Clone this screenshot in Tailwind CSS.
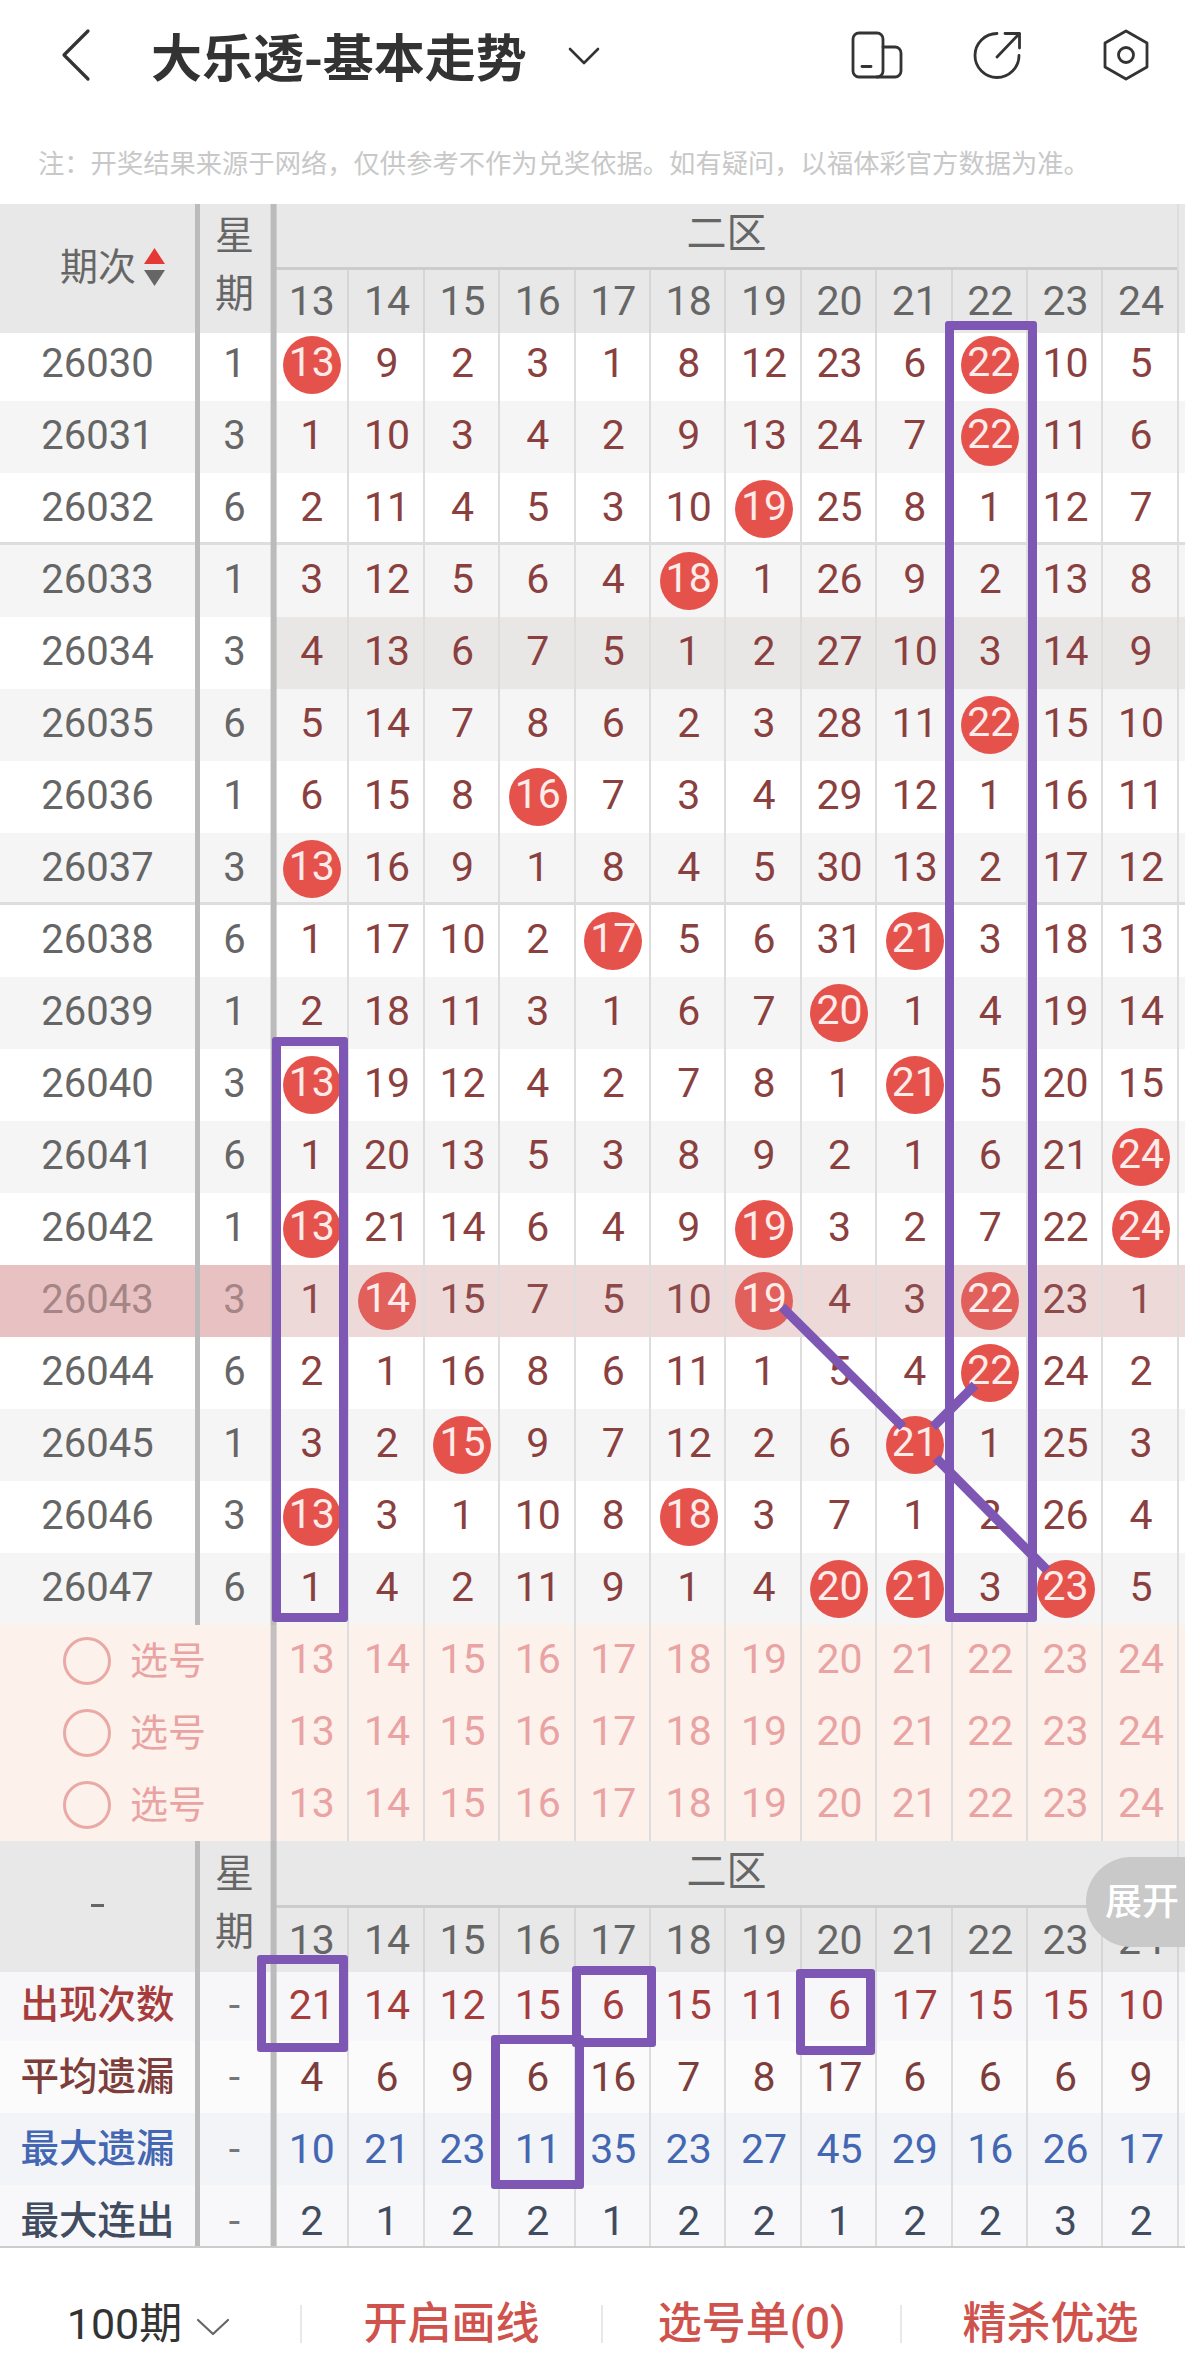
<!DOCTYPE html>
<html lang="zh-CN">
<head>
<meta charset="utf-8">
<title>大乐透-基本走势</title>
<script src="https://cdn.jsdelivr.net/npm/@tailwindcss/browser@4"></script>
</head>
<body class="bg-white">
<div class="relative h-[2374px] w-[1185px] overflow-hidden bg-white font-['Roboto','Noto_Sans_CJK_SC',sans-serif] text-[41px] leading-none text-[#666]">

  <!-- top bar -->
  <header class="flex h-[110px] items-center text-[#333]">
    <svg class="ml-[61px] h-[54px] w-[30px]" viewBox="0 0 30 54" fill="none" stroke="#333" stroke-width="3.2" stroke-linecap="round" stroke-linejoin="round"><path d="M27 3 3 27l24 24" /></svg>
    <h1 class="ml-[60px] font-['Noto_Sans_CJK_SC',sans-serif] text-[51px] font-bold">大乐透-基本走势</h1>
    <svg class="ml-[41px] mt-[1px] h-[20px] w-[32px]" viewBox="0 0 32 20" fill="none" stroke="#333" stroke-width="2.6" stroke-linecap="round" stroke-linejoin="round"><path d="m2 3 14 14L30 3" /></svg>
    <svg class="ml-[251px] h-[48px] w-[52px]" viewBox="0 0 52 48" fill="none" stroke="#333" stroke-width="2.800" stroke-linejoin="round" stroke-linecap="round"><rect x="2" y="2" width="30" height="44" rx="6" /><path d="M32 16h12a6 6 0 0 1 6 6v18a6 6 0 0 1-6 6H26" /><path d="M11 35.500h9" /></svg>
    <svg class="ml-[70px] h-[48px] w-[48px]" viewBox="0 0 48 48" fill="none" stroke="#333" stroke-width="2.800" stroke-linecap="round" stroke-linejoin="round"><path d="M24 2.500A22 22 0 1 0 46 24.500" /><path d="M24 26 46 3" /><path d="M32 2.500h14.500V17" /></svg>
    <svg class="ml-[81px] h-[52px] w-[48px]" viewBox="0 0 48 52" fill="none" stroke="#333" stroke-width="2.800" stroke-linejoin="round"><path d="m24 2 21 12v24L24 50 3 38V14z" /><circle cx="24" cy="26" r="7.500" /></svg>
  </header>

  <!-- note -->
  <p class="flex h-[94px] items-center pl-[38px] pt-[11px] font-['Noto_Sans_CJK_SC',sans-serif] text-[26.300px] text-[#c8c8c8]">注：开奖结果来源于网络，仅供参考不作为兑奖依据。如有疑问，以福体彩官方数据为准。</p>

  <!-- table header -->
  <section class="relative z-10 grid h-[129px] grid-cols-[195px_79px_1fr] bg-[#e8e8e8]">
    <div class="flex items-center justify-center gap-[8px] pl-[30px] pb-[3px] text-[38px]">
      <span>期次</span>
      <svg class="h-[38px] w-[21px] shrink-0" viewBox="0 0 21 38"><path d="M10.500 0 21 16H0z" fill="#e53935" /><path d="M0 22h21L10.500 38z" fill="#666" /></svg>
    </div>
    <div class="flex flex-col items-center justify-center gap-[19px] pb-[6px] text-[39px] shadow-[inset_5px_0_0_#bbb,inset_-3.400px_0_0_#bbb]"><span>星</span><span>期</span></div>
    <div>
      <div class="flex h-[66px] w-[904.800px] items-center justify-center pb-[6px] text-[40px] shadow-[inset_2.600px_0_0_#bbb,inset_-2px_0_0_#ddd,inset_0_-3px_0_#ccc]">二区</div>
      <div class="grid h-[63px] grid-cols-[repeat(12,75.400px)] [&>*]:flex [&>*]:items-center [&>*]:justify-center [&>*:first-child]:shadow-[inset_2.600px_0_0_#bbb,inset_-2px_0_0_#d6d6d6] [&>*:nth-child(n+2)]:shadow-[inset_-2px_0_0_#d6d6d6]">
        <span>13</span><span>14</span><span>15</span><span>16</span><span>17</span><span>18</span><span>19</span><span>20</span><span>21</span><span>22</span><span>23</span><span>24</span>
      </div>
    </div>
  </section>

  <!-- data rows -->
  <section class="-mt-[4px] text-[#8b4040] [&>div]:grid [&>div]:h-[72px] [&>div]:grid-cols-[195px_79px_repeat(12,75.400px)] [&>div>*]:flex [&>div>*]:items-center [&>div>*]:justify-center [&>div>*]:pb-[3px] [&>div>*:first-child]:text-[40px] [&>div>*:first-child]:text-[#666] [&>div>*:nth-child(2)]:text-[40px] [&>div>*:nth-child(2)]:text-[#666] [&>div>*:nth-child(2)]:shadow-[inset_5px_0_0_#bbb,inset_-3.400px_0_0_#bbb] [&>div>*:nth-child(3)]:shadow-[inset_2.600px_0_0_#bbb,inset_-2px_0_0_#ddd] [&>div>*:nth-child(n+4)]:shadow-[inset_-2px_0_0_#ddd] [&_i]:mt-[3px] [&_i]:flex [&_i]:h-[58px] [&_i]:w-[58px] [&_i]:shrink-0 [&_i]:items-center [&_i]:justify-center [&_i]:rounded-full [&_i]:bg-[#e5524c] [&_i]:pb-[5px] [&_i]:not-italic [&_i]:text-[#fdecea]">
    <div class="bg-white"><span>26030</span><span>1</span><span><i>13</i></span><span>9</span><span>2</span><span>3</span><span>1</span><span>8</span><span>12</span><span>23</span><span>6</span><span><i>22</i></span><span>10</span><span>5</span></div>
    <div class="bg-[#f5f5f5]"><span>26031</span><span>3</span><span>1</span><span>10</span><span>3</span><span>4</span><span>2</span><span>9</span><span>13</span><span>24</span><span>7</span><span><i>22</i></span><span>11</span><span>6</span></div>
    <div class="bg-white shadow-[inset_0_-3px_0_#ddd]"><span>26032</span><span>6</span><span>2</span><span>11</span><span>4</span><span>5</span><span>3</span><span>10</span><span><i>19</i></span><span>25</span><span>8</span><span>1</span><span>12</span><span>7</span></div>
    <div class="bg-[#f5f5f5]"><span>26033</span><span>1</span><span>3</span><span>12</span><span>5</span><span>6</span><span>4</span><span><i>18</i></span><span>1</span><span>26</span><span>9</span><span>2</span><span>13</span><span>8</span></div>
    <div class="bg-[linear-gradient(to_right,white_274px,#e9e6e6_274px)]"><span>26034</span><span>3</span><span>4</span><span>13</span><span>6</span><span>7</span><span>5</span><span>1</span><span>2</span><span>27</span><span>10</span><span>3</span><span>14</span><span>9</span></div>
    <div class="bg-[#f5f5f5]"><span>26035</span><span>6</span><span>5</span><span>14</span><span>7</span><span>8</span><span>6</span><span>2</span><span>3</span><span>28</span><span>11</span><span><i>22</i></span><span>15</span><span>10</span></div>
    <div class="bg-white"><span>26036</span><span>1</span><span>6</span><span>15</span><span>8</span><span><i>16</i></span><span>7</span><span>3</span><span>4</span><span>29</span><span>12</span><span>1</span><span>16</span><span>11</span></div>
    <div class="bg-[#f5f5f5] shadow-[inset_0_-3px_0_#ddd]"><span>26037</span><span>3</span><span><i>13</i></span><span>16</span><span>9</span><span>1</span><span>8</span><span>4</span><span>5</span><span>30</span><span>13</span><span>2</span><span>17</span><span>12</span></div>
    <div class="bg-white"><span>26038</span><span>6</span><span>1</span><span>17</span><span>10</span><span>2</span><span><i>17</i></span><span>5</span><span>6</span><span>31</span><span><i>21</i></span><span>3</span><span>18</span><span>13</span></div>
    <div class="bg-[#f5f5f5]"><span>26039</span><span>1</span><span>2</span><span>18</span><span>11</span><span>3</span><span>1</span><span>6</span><span>7</span><span><i>20</i></span><span>1</span><span>4</span><span>19</span><span>14</span></div>
    <div class="bg-white"><span>26040</span><span>3</span><span><i>13</i></span><span>19</span><span>12</span><span>4</span><span>2</span><span>7</span><span>8</span><span>1</span><span><i>21</i></span><span>5</span><span>20</span><span>15</span></div>
    <div class="bg-[#f5f5f5]"><span>26041</span><span>6</span><span>1</span><span>20</span><span>13</span><span>5</span><span>3</span><span>8</span><span>9</span><span>2</span><span>1</span><span>6</span><span>21</span><span><i>24</i></span></div>
    <div class="bg-white"><span>26042</span><span>1</span><span><i>13</i></span><span>21</span><span>14</span><span>6</span><span>4</span><span>9</span><span><i>19</i></span><span>3</span><span>2</span><span>7</span><span>22</span><span><i>24</i></span></div>
    <div class="bg-[linear-gradient(to_right,#e8c2c2_274px,#eed9d9_274px)] text-[#8e4a4a] [&>*:first-child]:!text-[#a58585] [&>*:nth-child(2)]:!text-[#a58585] [&_i]:!bg-[#e2605c]"><span>26043</span><span>3</span><span>1</span><span><i>14</i></span><span>15</span><span>7</span><span>5</span><span>10</span><span><i>19</i></span><span>4</span><span>3</span><span><i>22</i></span><span>23</span><span>1</span></div>
    <div class="bg-white"><span>26044</span><span>6</span><span>2</span><span>1</span><span>16</span><span>8</span><span>6</span><span>11</span><span>1</span><span>5</span><span>4</span><span><i>22</i></span><span>24</span><span>2</span></div>
    <div class="bg-[#f5f5f5]"><span>26045</span><span>1</span><span>3</span><span>2</span><span><i>15</i></span><span>9</span><span>7</span><span>12</span><span>2</span><span>6</span><span><i>21</i></span><span>1</span><span>25</span><span>3</span></div>
    <div class="bg-white"><span>26046</span><span>3</span><span><i>13</i></span><span>3</span><span>1</span><span>10</span><span>8</span><span><i>18</i></span><span>3</span><span>7</span><span>1</span><span>2</span><span>26</span><span>4</span></div>
    <div class="bg-[#f5f5f5]"><span>26047</span><span>6</span><span>1</span><span>4</span><span>2</span><span>11</span><span>9</span><span>1</span><span>4</span><span><i>20</i></span><span><i>21</i></span><span>3</span><span><i>23</i></span><span>5</span></div>
  </section>

  <!-- pick rows -->
  <section class="bg-[#fdf1ec] text-[#e9a3a3] [&>div]:grid [&>div]:h-[72px] [&>div]:grid-cols-[274px_repeat(12,75.400px)] [&>div>*]:flex [&>div>*]:items-center [&>div>*]:justify-center [&>div>*]:pb-[3px] [&>div>*:first-child]:justify-start [&>div>*:first-child]:gap-[19px] [&>div>*:first-child]:pl-[63px] [&>div>*:first-child]:pb-0 [&>div>*:first-child]:text-[38px] [&>div>*:first-child]:shadow-[inset_-3.400px_0_0_#c4c0c0] [&>div>*:nth-child(2)]:shadow-[inset_2.600px_0_0_#c4c0c0,inset_-2px_0_0_#ddd] [&>div>*:nth-child(n+3)]:shadow-[inset_-2px_0_0_#ddd] [&_b]:h-[48px] [&_b]:w-[48px] [&_b]:rounded-full [&_b]:border-[3px] [&_b]:border-[#e9aaa6]">
    <div><span><b></b><em class="not-italic">选号</em></span><span>13</span><span>14</span><span>15</span><span>16</span><span>17</span><span>18</span><span>19</span><span>20</span><span>21</span><span>22</span><span>23</span><span>24</span></div>
    <div><span><b></b><em class="not-italic">选号</em></span><span>13</span><span>14</span><span>15</span><span>16</span><span>17</span><span>18</span><span>19</span><span>20</span><span>21</span><span>22</span><span>23</span><span>24</span></div>
    <div><span><b></b><em class="not-italic">选号</em></span><span>13</span><span>14</span><span>15</span><span>16</span><span>17</span><span>18</span><span>19</span><span>20</span><span>21</span><span>22</span><span>23</span><span>24</span></div>
  </section>

  <!-- repeated header -->
  <section class="relative z-10 grid h-[131px] grid-cols-[195px_79px_1fr] bg-[#e8e8e8]">
    <div class="flex items-center justify-center pb-[3px] text-[38px]"><span class="h-[3px] w-[13px] bg-[#666]"></span></div>
    <div class="flex flex-col items-center justify-center gap-[19px] pb-[6px] text-[39px] shadow-[inset_5px_0_0_#bbb,inset_-3.400px_0_0_#bbb]"><span>星</span><span>期</span></div>
    <div>
      <div class="flex h-[67px] w-[904.800px] items-center justify-center pb-[6px] text-[40px] shadow-[inset_2.600px_0_0_#bbb,inset_-2px_0_0_#ddd,inset_0_-3px_0_#ccc]">二区</div>
      <div class="grid h-[64px] grid-cols-[repeat(12,75.400px)] [&>*]:flex [&>*]:items-center [&>*]:justify-center [&>*:first-child]:shadow-[inset_2.600px_0_0_#bbb,inset_-2px_0_0_#d6d6d6] [&>*:nth-child(n+2)]:shadow-[inset_-2px_0_0_#d6d6d6]">
        <span>13</span><span>14</span><span>15</span><span>16</span><span>17</span><span>18</span><span>19</span><span>20</span><span>21</span><span>22</span><span>23</span><span>24</span>
      </div>
    </div>
  </section>

  <!-- statistics -->
  <section class="-mt-[3px] h-[279px] overflow-hidden border-b-2 border-[#ccc] [&>div]:grid [&>div]:h-[72px] [&>div]:grid-cols-[195px_79px_repeat(12,75.400px)] [&>div>*]:flex [&>div>*]:items-center [&>div>*]:justify-center [&>div>*:first-child]:text-[38.500px] [&>div>*:first-child]:font-medium [&>div>*:nth-child(2)]:text-[#777] [&>div>*:nth-child(2)]:shadow-[inset_5px_0_0_#bbb,inset_-3.400px_0_0_#bbb] [&>div>*:nth-child(3)]:shadow-[inset_2.600px_0_0_#bbb,inset_-2px_0_0_#ddd] [&>div>*:nth-child(n+4)]:shadow-[inset_-2px_0_0_#ddd]">
    <div class="bg-[#f7f7f9] text-[#a63c3c]"><span>出现次数</span><span>-</span><span>21</span><span>14</span><span>12</span><span>15</span><span>6</span><span>15</span><span>11</span><span>6</span><span>17</span><span>15</span><span>15</span><span>10</span></div>
    <div class="bg-[#fbfbfb] text-[#7d3d3a]"><span>平均遗漏</span><span>-</span><span>4</span><span>6</span><span>9</span><span>6</span><span>16</span><span>7</span><span>8</span><span>17</span><span>6</span><span>6</span><span>6</span><span>9</span></div>
    <div class="bg-[#f3f4f8] text-[#4367b2]"><span>最大遗漏</span><span>-</span><span>10</span><span>21</span><span>23</span><span>11</span><span>35</span><span>23</span><span>27</span><span>45</span><span>29</span><span>16</span><span>26</span><span>17</span></div>
    <div class="bg-[#f8f8fa] text-[#414c60]"><span>最大连出</span><span>-</span><span>2</span><span>1</span><span>2</span><span>2</span><span>1</span><span>2</span><span>2</span><span>1</span><span>2</span><span>2</span><span>3</span><span>2</span></div>
  </section>

  <!-- bottom bar -->
  <footer class="flex h-[126px] items-center pt-[26px] text-[44px] font-medium text-[#cf524d]">
    <div class="flex w-[300px] items-center justify-center gap-[14px] pr-[3px] text-[43px] font-normal text-[#333]">
      <span>100期</span>
      <svg class="mt-[6px] h-[18px] w-[34px]" viewBox="0 0 34 18" fill="none" stroke="#666" stroke-width="2.200" stroke-linecap="round" stroke-linejoin="round"><path d="m2 2 15 14L32 2" /></svg>
    </div>
    <span class="h-[38px] w-[2px] bg-[#e8e8e8]"></span>
    <div class="w-[299px] text-center">开启画线</div>
    <span class="h-[38px] w-[2px] bg-[#e8e8e8]"></span>
    <div class="w-[297px] text-center">选号单(0)</div>
    <span class="h-[38px] w-[2px] bg-[#e8e8e8]"></span>
    <div class="flex-1 pl-[14px] text-center">精杀优选</div>
  </footer>

  <!-- expand pill -->
  <div class="absolute left-[1086px] top-[1857px] z-20 flex h-[90px] w-[99px] items-center rounded-l-[45px] bg-[#c9c9c9] pl-[19px] text-[37px] font-medium text-white">展开</div>

  <!-- hand-drawn annotations -->
  <svg class="pointer-events-none absolute left-0 top-0 z-30 h-[2374px] w-[1185px]" viewBox="0 0 1185 2374" fill="none" stroke="#7e57b5" stroke-width="9.500">
    <path d="M782 1307 903 1427" />
    <path d="M933 1427 975 1385" />
    <path d="M936 1458 1047 1570" />
  </svg>
  <div class="absolute left-[272px] top-[1037px] z-30 h-[585px] w-[76px] rounded-[3px] border-[9px] border-[#7e57b5]"></div>
  <div class="absolute left-[945px] top-[321px] z-30 h-[1301px] w-[92px] rounded-[3px] border-[9px] border-[#7e57b5]"></div>
  <div class="absolute left-[257px] top-[1955px] z-30 h-[97px] w-[91px] rounded-[3px] border-[9px] border-[#7e57b5]"></div>
  <div class="absolute left-[572px] top-[1966px] z-30 h-[81px] w-[84px] rounded-[3px] border-[9px] border-[#7e57b5]"></div>
  <div class="absolute left-[796px] top-[1969px] z-30 h-[86px] w-[79px] rounded-[3px] border-[9px] border-[#7e57b5]"></div>
  <div class="absolute left-[491px] top-[2035px] z-30 h-[154px] w-[93px] rounded-[3px] border-[9px] border-[#7e57b5]"></div>
</div>
</body>
</html>
